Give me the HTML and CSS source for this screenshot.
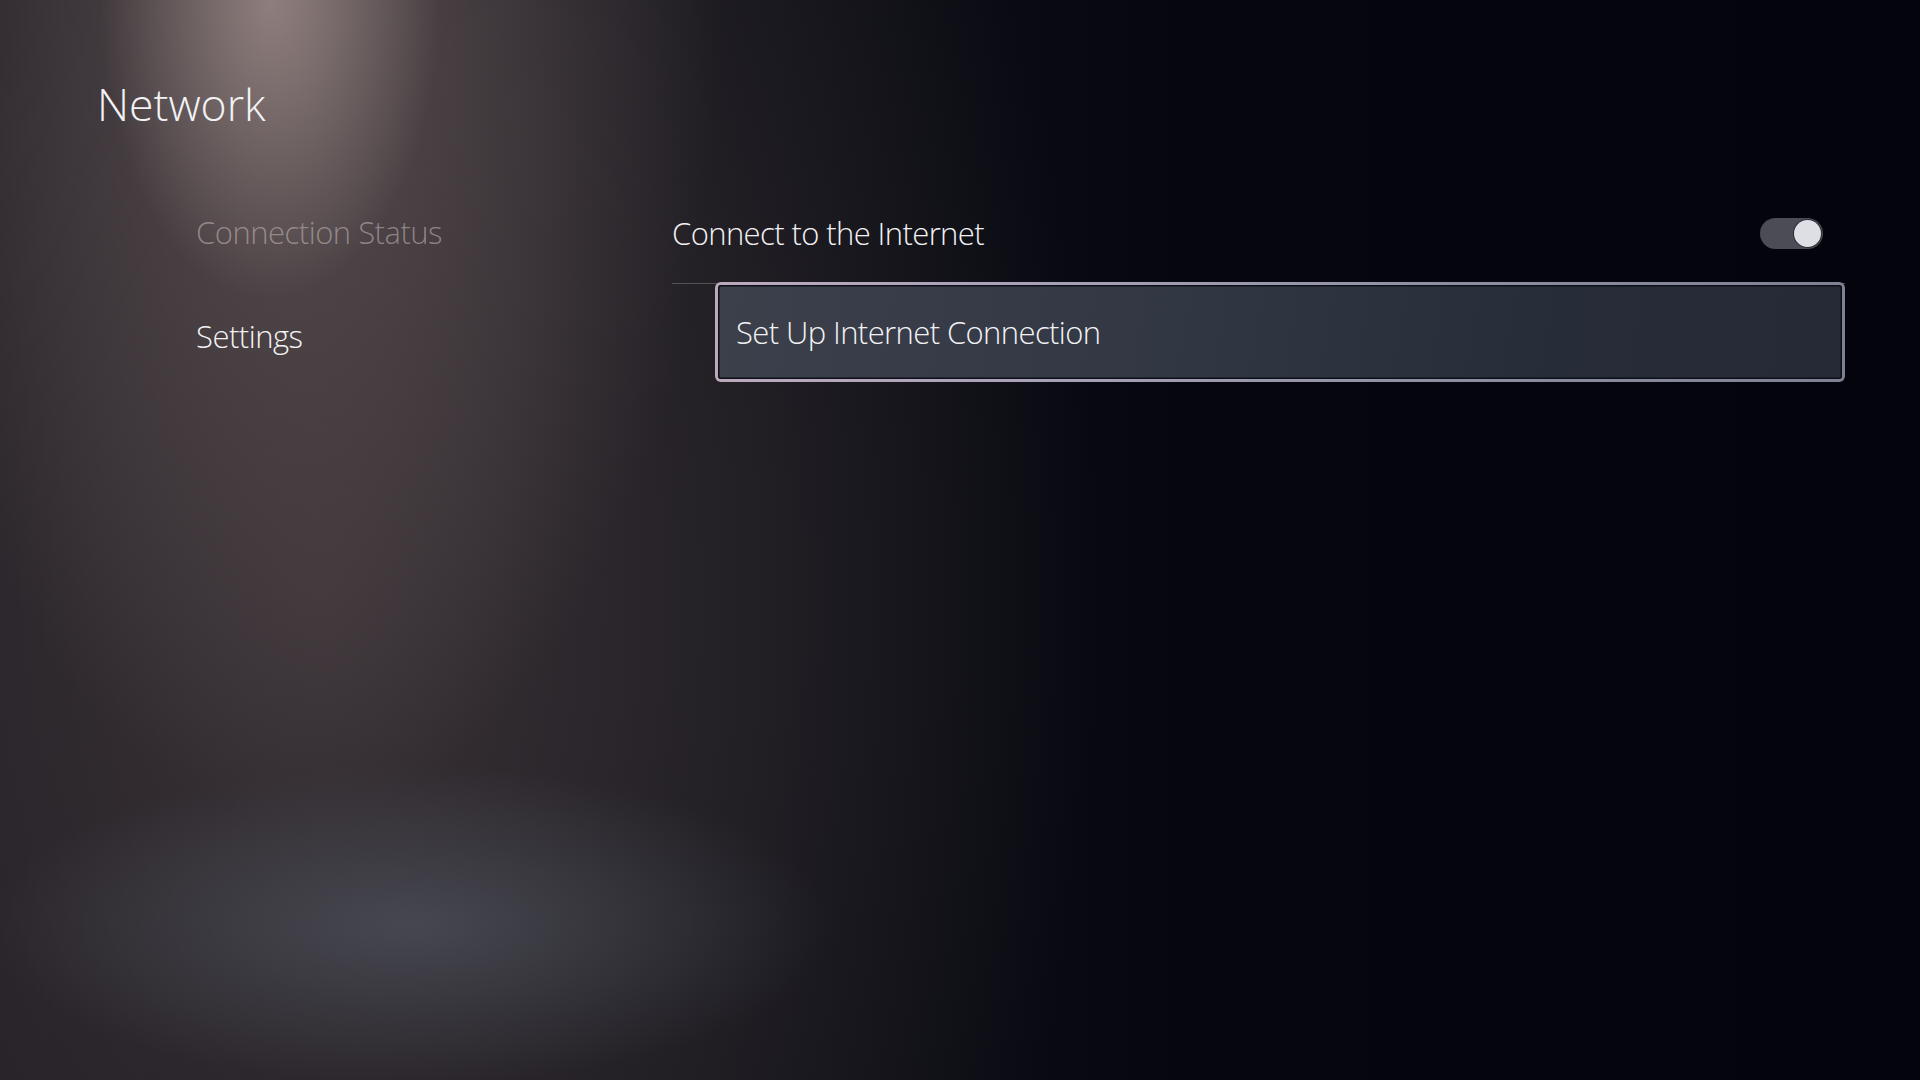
FILE: index.html
```html
<!DOCTYPE html>
<html lang="en">
<head>
<meta charset="utf-8">
<title>Network</title>
<link rel="stylesheet" href="styles.css">
</head>
<body>
<div class="screen">
  <header class="page-header">
    <h1 class="page-title">Network</h1>
  </header>
  <div class="layout">
    <nav class="side-nav">
      <div class="nav-item nav-item--dim">Connection Status</div>
      <div class="nav-item">Settings</div>
    </nav>
    <section class="options">
      <div class="option-row">
        <span class="option-label">Connect to the Internet</span>
        <span class="toggle"><span class="toggle-knob"></span></span>
      </div>
      <div class="option-focus">
        <span class="option-label">Set Up Internet Connection</span>
      </div>
    </section>
  </div>
</div>
</body>
</html>
```
FILE: styles.css
```css
html, body {
  margin: 0;
  padding: 0;
}
body {
  width: 1920px;
  height: 1080px;
  overflow: hidden;
  font-family: "Open Sans", "Noto Sans", sans-serif;
  font-weight: 300;
  color: #f2f2f4;
  background:
    radial-gradient(ellipse 170px 300px at 270px 0px, rgba(190,170,165,0.55), rgba(190,170,165,0) 100%),
    radial-gradient(ellipse 420px 820px at 300px 0px, rgba(112,98,98,0.65), rgba(112,98,98,0) 100%),
    radial-gradient(ellipse 420px 160px at 410px 925px, rgba(84,90,102,0.6), rgba(84,90,102,0) 100%),
    radial-gradient(ellipse 780px 1300px at 320px 600px, rgba(60,52,56,0.95), rgba(60,52,56,0) 100%),
    linear-gradient(90deg, #1a181f 0%, #0f1017 40%, #05060f 62%, #03040c 100%);
}
.screen {
  display: flex;
  flex-direction: column;
}
.page-header {
  padding: 74px 0 0 97px;
}
.page-title {
  margin: 0;
  font-size: 44.5px;
  font-weight: 300;
  line-height: 60px;
}
.layout {
  display: grid;
  grid-template-columns: 476px 1173px;
  margin-top: 49px;
  padding-left: 196px;
}
.side-nav {
  display: flex;
  flex-direction: column;
  margin-top: -3px;
}
.nav-item {
  height: 104px;
  display: flex;
  align-items: center;
  font-size: 31px;
  line-height: 42px;
  letter-spacing: -0.5px;
}
.nav-item--dim {
  color: rgba(200,190,192,0.55);
}
.options {
  display: flex;
  flex-direction: column;
}
.option-row {
  height: 101px;
  box-sizing: border-box;
  border-bottom: 1px solid rgba(150,140,150,0.45);
  display: flex;
  align-items: center;
  justify-content: space-between;
  padding: 0 22px 0 0;
}
.option-label {
  font-size: 31px;
  line-height: 42px;
  letter-spacing: -0.6px;
}
.toggle {
  width: 63px;
  height: 31px;
  border-radius: 16px;
  background: #4b4c56;
  display: flex;
  align-items: center;
  justify-content: flex-end;
  padding: 0 2px;
  box-sizing: border-box;
}
.toggle-knob {
  width: 27px;
  height: 27px;
  border-radius: 50%;
  background: #dedfe5;
  box-shadow: 0 0 0 1px #2d2e37;
}
.option-focus {
  margin: -2px 0 0 43px;
  height: 100px;
  box-sizing: border-box;
  border: 3px solid transparent;
  border-radius: 6px;
  background:
    linear-gradient(100deg, #3c404b 0%, #323744 40%, #272c39 75%, #262a37 100%) padding-box,
    linear-gradient(95deg, #bcaabd 0%, #a7a1b8 30%, #8c8f9e 65%, #7d8192 100%) border-box;
  box-shadow: inset 0 0 0 1.5px #0e1018;
  display: flex;
  align-items: center;
  padding-left: 18px;
}
```
